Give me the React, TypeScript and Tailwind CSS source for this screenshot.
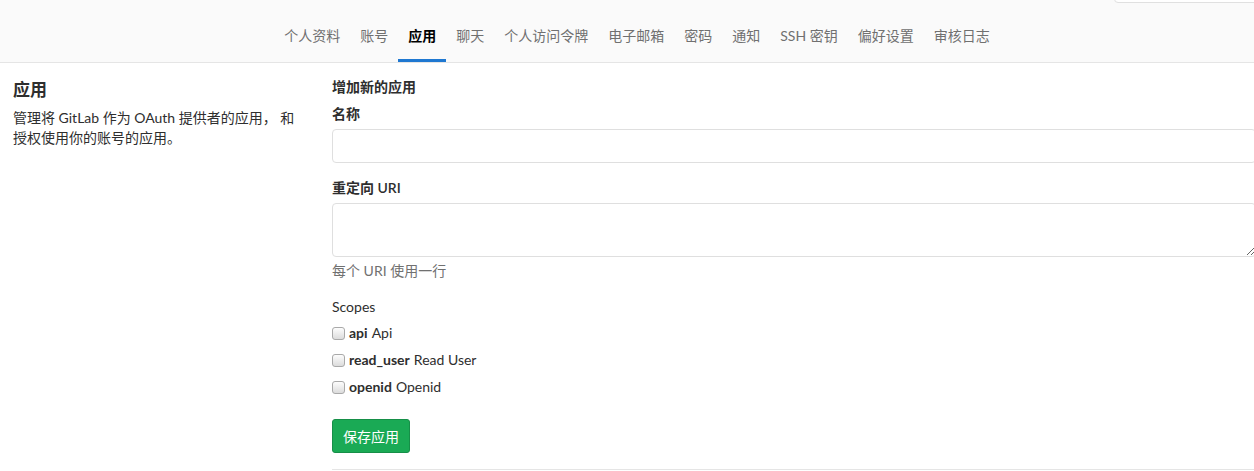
import * as React from 'react';

const tabs = ['个人资料', '账号', '应用', '聊天', '个人访问令牌', '电子邮箱', '密码', '通知', 'SSH 密钥', '偏好设置', '审核日志'];

const scopes = [
  { key: 'api', label: 'Api' },
  { key: 'read_user', label: 'Read User' },
  { key: 'openid', label: 'Openid' },
];

function ScopeRow({ name, label }: { name: string; label: string }) {
  return (
    <label className="flex items-center h-[20px] leading-[20px]">
      <input
        type="checkbox"
        className="appearance-none w-[13px] h-[13px] mr-[4px] rounded-[3px] border border-[#a9a9a9] bg-gradient-to-b from-[#fdfdfd] to-[#dcdcdc]"
      />
      <span className="font-bold text-[#2e2e2e]">{name}</span>
      <span className="ml-[4px] text-[#2e2e2e]">{label}</span>
    </label>
  );
}

export default function App() {
  return (
    <div
      className="relative w-[1254px] h-[471px] overflow-hidden bg-white text-[14px] text-[#2e2e2e]"
      style={{ fontFamily: '"Lato", "Noto Sans CJK SC", sans-serif' }}
    >
      {/* search box edge from the header above */}
      <div className="absolute top-[-20px] left-[1114px] w-[160px] h-[23px] rounded-[4px] border border-[#e0e0e0] bg-white" />

      <nav className="flex justify-center pl-[20px] h-[63px] bg-[#fafafa] border-b border-[#e5e5e5]">
        {tabs.map((t) => (
          <div
            key={t}
            className={
              t === '应用'
                ? 'flex items-center px-[10px] pt-[11px] border-b-[3px] border-[#1f78d1] font-bold text-black'
                : 'flex items-center px-[10px] pt-[11px] border-b-[3px] border-transparent text-[#707070]'
            }
          >
            {t}
          </div>
        ))}
      </nav>

      <div className="flex">
        <div className="w-[332px] shrink-0 pl-[13px]">
          <h4 className="mt-[17px] text-[17px] leading-[20px] font-bold text-[#2e2e2e]">应用</h4>
          <p className="mt-[8px] leading-[20px] text-[#2e2e2e]">
            管理将 GitLab 作为 OAuth 提供者的应用， 和
            <br />
            授权使用你的账号的应用。
          </p>
        </div>

        <div className="w-[924px] shrink-0">
          <div className="mt-[14px] leading-[20px] font-semibold">增加新的应用</div>
          <div className="mt-[7px] leading-[20px] font-semibold">名称</div>
          <input type="text" className="mt-[5px] block w-full h-[34px] rounded-[4px] border border-[#dfdfdf] bg-white" />
          <div className="mt-[15px] leading-[20px] font-semibold">重定向 URI</div>
          <textarea className="mt-[5px] block w-full h-[54px] rounded-[4px] border border-[#dfdfdf] bg-white" />
          <div className="mt-[4px] leading-[20px] text-[#707070]">每个 URI 使用一行</div>
          <div className="mt-[16px] leading-[20px]">Scopes</div>
          <div className="mt-[6px] flex flex-col gap-[7px]">
            {scopes.map((s) => (
              <ScopeRow key={s.key} name={s.key} label={s.label} />
            ))}
          </div>
          <button className="mt-[22px] h-[34px] px-[10px] rounded-[3px] border border-[#168f48] bg-[#1aaa55] text-white">
            保存应用
          </button>
          <div className="mt-[16px] border-t border-[#e5e5e5]" />
        </div>
      </div>
    </div>
  );
}
